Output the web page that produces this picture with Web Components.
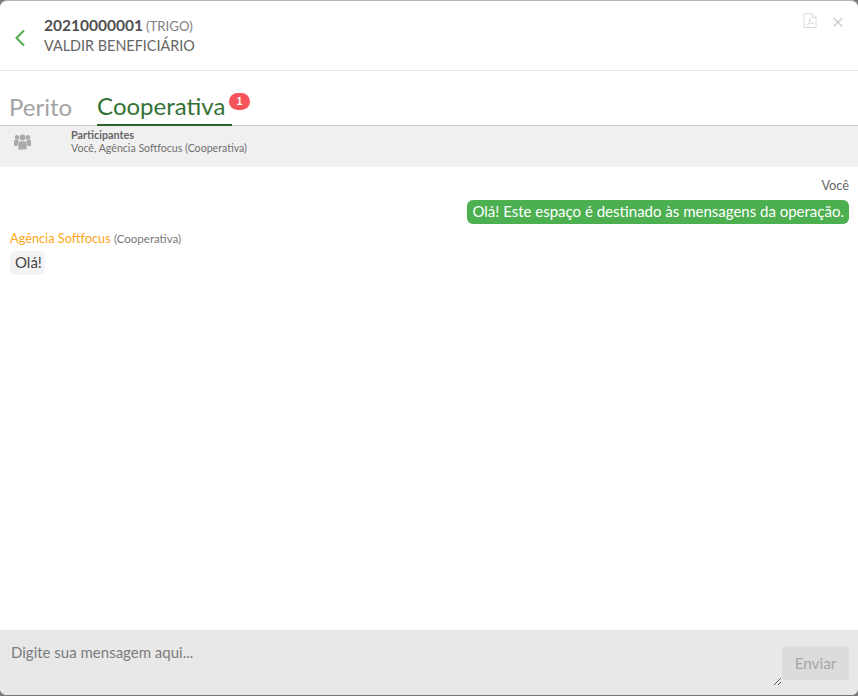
<!DOCTYPE html>
<html>
<head>
<meta charset="utf-8">
<style>
html, body { margin: 0; height: 100%; background: #fff; }
body { font-family: Lato, "Open Sans", sans-serif; color: #555; overflow: hidden; }
</style>
</head>
<body>
<chat-dialog>
  <chat-header slot="header"></chat-header>
  <chat-tabs slot="tabs"></chat-tabs>
  <chat-participants slot="participants"></chat-participants>
  <chat-message side="me" author="Você">Olá! Este espaço é destinado às mensagens da operação.</chat-message>
  <chat-message author="Agência Softfocus" role="(Cooperativa)">Olá!</chat-message>
  <chat-input slot="input"></chat-input>
</chat-dialog>
<script>
class ChatDialog extends HTMLElement {
  constructor() {
    super();
    this.attachShadow({mode: 'open'}).innerHTML = `
<style>
:host { display: block; background: #7a7a7a; height: 696px; }
.box {
  height: 100%; box-sizing: border-box; display: flex; flex-direction: column;
  background: #fff; border-radius: 7px; border-top: 1px solid #b5b5b5; border-bottom: 1px solid #777; overflow: hidden;
}
main { flex: 1; min-height: 0; padding: 10px 9px 0 10px; display: flex; flex-direction: column; }
</style>
<div class="box">
  <slot name="header"></slot>
  <slot name="tabs"></slot>
  <slot name="participants"></slot>
  <main><slot></slot></main>
  <slot name="input"></slot>
</div>`;
  }
}
customElements.define('chat-dialog', ChatDialog);

class ChatHeader extends HTMLElement {
  constructor() {
    super();
    this.attachShadow({mode: 'open'}).innerHTML = `
<style>
:host { display: flex; height: 69px; border-bottom: 1px solid #e4e4e4; box-sizing: content-box; }
.back { width: 44px; display: flex; justify-content: center; padding: 28px 4px 0 0; box-sizing: border-box; }
.title { padding-top: 13px; line-height: 21px; color: #666; flex: 1; }
b { font-size: 15.500px; color: #505050; font-weight: 700; }
.crop { font-size: 13.200px; color: #808080; margin-left: -1px; }
.name { font-size: 14.400px; line-height: 20px; margin-top: -1px; }
.tools { display: flex; gap: 16px; padding: 12px 15px 0 0; align-items: flex-start; }
</style>
<div class="back">
  <svg width="12" height="18" viewBox="0 0 12 18"><path d="M10 1.500 2.500 9l7.500 7.500" fill="none" stroke="#4caf50" stroke-width="2"/></svg>
</div>
<div class="title">
  <div><b>20210000001</b> <span class="crop">(TRIGO)</span></div>
  <div class="name">VALDIR BENEFICIÁRIO</div>
</div>
<div class="tools">
  <svg width="14" height="15" viewBox="0 0 14 15" fill="none" stroke="#dcdcdc" stroke-width="1">
    <path d="M1 .5h8l4 4v10H1z"/><path d="M9 .5v4h4"/><path d="M3.500 12c2-1 3.500-4 3-7 .5 3 2 4.500 4.500 5-2.500-.2-5 .5-7.500 2z"/>
  </svg>
  <svg width="10" height="15" viewBox="0 0 10 15" fill="none" stroke="#cfcfcf" stroke-width="1.500" style="padding-top:2px">
    <path d="M.8 3 9.200 11.500M9.200 3 .8 11.500"/>
  </svg>
</div>`;
  }
}
customElements.define('chat-header', ChatHeader);

class ChatTabs extends HTMLElement {
  constructor() {
    super();
    this.attachShadow({mode: 'open'}).innerHTML = `
<style>
:host { display: flex; height: 54px; padding-left: 9px; gap: 25px; border-bottom: 1px solid #c8c8c8; align-items: flex-end; }
.tab { font-size: 24px; line-height: 28px; color: #a3a3a3; height: 33px; box-sizing: border-box; position: relative; margin-bottom: -1px; }
.on { color: #357235; border-bottom: 2px solid #2a6428; width: 135px; height: 34px; }
.badge {
  position: absolute; left: 132px; top: 1px; width: 21px; height: 17px; border-radius: 9px;
  background: #f7535a; color: #fff; font: 700 10px/17px "Liberation Sans", sans-serif; text-align: center;
}
</style>
<div class="tab">Perito</div>
<div class="tab on">Cooperativa<span class="badge">1</span></div>`;
  }
}
customElements.define('chat-tabs', ChatTabs);

class ChatParticipants extends HTMLElement {
  constructor() {
    super();
    this.attachShadow({mode: 'open'}).innerHTML = `
<style>
:host { display: flex; height: 41px; background: #f0f0f0; color: #666; }
.icon { width: 71px; padding: 8px 0 0 14px; box-sizing: border-box; }
.text { padding-top: 3px; }
.t { font-size: 10.800px; line-height: 12px; font-weight: 700; color: #666; }
.s { font-size: 10.600px; line-height: 15px; color: #707070; }
</style>
<div class="icon">
  <svg width="17" height="16" viewBox="0 0 17 16" fill="#ababab">
    <circle cx="8.500" cy="3.600" r="3"/><circle cx="3" cy="3.400" r="2.300"/><circle cx="14" cy="3.400" r="2.300"/>
    <path d="M4.300 9c0-1 1-1.700 2-1.700h4.400c1 0 2 .7 2 1.700v6.500H4.300z"/>
    <path d="M0 7c0-.8.700-1.200 1.500-1.200H4.600L3.500 12H0zM17 7c0-.8-.7-1.200-1.500-1.200H12.400L13.500 12H17z"/>
  </svg>
</div>
<div class="text">
  <div class="t">Participantes</div>
  <div class="s">Você, Agência Softfocus (Cooperativa)</div>
</div>`;
  }
}
customElements.define('chat-participants', ChatParticipants);

class ChatMessage extends HTMLElement {
  constructor() {
    super();
    const role = this.getAttribute('role');
    this.attachShadow({mode: 'open'}).innerHTML = `
<style>
:host { display: flex; flex-direction: column; align-items: flex-start; margin-bottom: 6px; }
:host([side="me"]) { align-items: flex-end; }
.who { font-size: 12.750px; line-height: 16px; color: #ffa617; margin-bottom: 4px; }
:host([side="me"]) .who { color: #666; margin-bottom: 7px; }
small { font-size: 11.500px; color: #777; }
.bubble {
  font-size: 15px; line-height: 23px; padding: 0 3px 1px 5px; border-radius: 6px;
  background: #f3f3f3; color: #444;
}
:host([side="me"]) .bubble { background: #4caf50; color: #fff; padding-right: 5px; }
</style>
<div class="who">${this.getAttribute('author')}${role ? ` <small>${role}</small>` : ''}</div>
<div class="bubble"><slot></slot></div>`;
  }
}
customElements.define('chat-message', ChatMessage);

class ChatInput extends HTMLElement {
  constructor() {
    super();
    this.attachShadow({mode: 'open'}).innerHTML = `
<style>
:host { display: flex; height: 65px; background: #e8e8e8; }
textarea {
  flex: 1; min-width: 0; height: 56px; box-sizing: border-box; border: 0; outline: 0; background: transparent;
  padding: 12px 11px; margin: 0; font: 15px/20px Lato, sans-serif; color: #555;
}
textarea::placeholder { color: #7c7c7c; opacity: 1; }
button {
  width: 67px; height: 34px; margin: 16px 9px 0 0; border: 0; border-radius: 4px;
  background: #dcdcdc; color: #a6a6a6; font: 15.300px Lato, sans-serif; padding: 0;
}
</style>
<textarea placeholder="Digite sua mensagem aqui..."></textarea>
<button disabled>Enviar</button>`;
  }
}
customElements.define('chat-input', ChatInput);
</script>
</body>
</html>
